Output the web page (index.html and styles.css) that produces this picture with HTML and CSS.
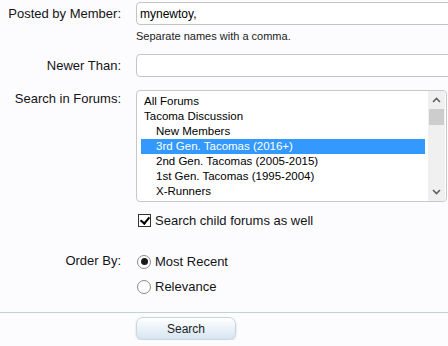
FILE: index.html
```html
<!DOCTYPE html>
<html lang="en">
<head>
  <meta charset="UTF-8">
  <title>Search Threads and Posts</title>
  <link rel="stylesheet" href="styles.css">
</head>
<body>
  <form class="search-form">
    <div class="ctrl-unit">
      <label class="ctrl-label">Posted by Member:</label>
      <div class="ctrl-field">
        <input type="text" class="text-ctrl" value="mynewtoy,">
        <p class="explain">Separate names with a comma.</p>
      </div>
    </div>

    <div class="ctrl-unit">
      <label class="ctrl-label">Newer Than:</label>
      <div class="ctrl-field">
        <input type="text" class="text-ctrl">
      </div>
    </div>

    <div class="ctrl-unit">
      <label class="ctrl-label list-label">Search in Forums:</label>
      <div class="ctrl-field">
        <div class="forum-list">
          <ul class="forum-options">
            <li>All Forums</li>
            <li>Tacoma Discussion</li>
            <li class="child">New Members</li>
            <li class="child selected">3rd Gen. Tacomas (2016+)</li>
            <li class="child">2nd Gen. Tacomas (2005-2015)</li>
            <li class="child">1st Gen. Tacomas (1995-2004)</li>
            <li class="child">X-Runners</li>
          </ul>
          <div class="scrollbar">
            <svg class="arrow" width="9" height="6" viewBox="0 0 9 6"><path d="M1 5 L4.5 1.5 L8 5" fill="none" stroke="#606060" stroke-width="1.6"/></svg>
            <div class="thumb"></div>
            <div class="track"></div>
            <svg class="arrow" width="9" height="6" viewBox="0 0 9 6"><path d="M1 1 L4.5 4.5 L8 1" fill="none" stroke="#606060" stroke-width="1.6"/></svg>
          </div>
        </div>
        <label class="check-line">
          <span class="check-box checked"></span>
          Search child forums as well
        </label>
      </div>
    </div>

    <div class="ctrl-unit order-unit">
      <label class="ctrl-label">Order By:</label>
      <div class="ctrl-field">
        <label class="radio-line"><span class="radio on"></span>Most Recent</label>
        <label class="radio-line"><span class="radio"></span>Relevance</label>
      </div>
    </div>

    <div class="submit-unit">
      <button type="button" class="button">Search</button>
    </div>
  </form>
</body>
</html>
```

FILE: styles.css
```css
* {
  margin: 0;
  padding: 0;
  box-sizing: border-box;
}
body {
  background: #fcfcff;
  font-family: 'Liberation Sans', Arial, sans-serif;
  color: #141414;
  overflow: hidden;
}
.search-form {
  padding-top: 2px;
}
.ctrl-unit {
  display: grid;
  grid-template-columns: 121px 1fr;
  column-gap: 15px;
  margin-bottom: 11px;
}
.ctrl-label {
  font-size: 13px;
  text-align: right;
  padding-top: 4px;
  line-height: 16px;
  white-space: nowrap;
}
.list-label {
  padding-top: 3px;
}
.ctrl-field {
  min-width: 0;
}
.text-ctrl {
  display: block;
  width: 340px;
  height: 23px;
  border: 1px solid #c4c4c4;
  border-radius: 4px;
  background: #fff;
  padding: 0 3px;
  font-family: 'Liberation Sans', Arial, sans-serif;
  font-size: 12px;
  color: #000;
  outline: none;
}
.explain {
  font-size: 11px;
  line-height: 14px;
  margin-top: 4px;
  color: #222;
}
.forum-list {
  display: flex;
  width: 311px;
  height: 112px;
  border: 1px solid #c8c8c8;
  border-radius: 4px;
  background: #fff;
  padding: 3px 1px 2px 4px;
  margin-top: 2px;
}
.forum-options {
  list-style: none;
  flex: 1;
  font-size: 11.5px;
  line-height: 15px;
  color: #000;
}
.forum-options li {
  padding-left: 3px;
  white-space: nowrap;
}
.forum-options .child {
  padding-left: 15px;
}
.forum-options .selected {
  background: #3399ff;
  color: #fff;
}
.scrollbar {
  width: 17px;
  margin: -3px 0 -2px 3px;
  background: #f0f0f0;
  display: flex;
  flex-direction: column;
  align-items: center;
}
.arrow {
  margin: 6px 0;
  flex: none;
}
.thumb {
  width: 15px;
  height: 16px;
  background: #cdcdcd;
}
.track {
  flex: 1;
}
.check-line {
  display: flex;
  align-items: center;
  gap: 4px;
  font-size: 13px;
  margin-top: 11px;
  margin-left: 2px;
}
.check-box {
  width: 13px;
  height: 13px;
  border: 1px solid #333;
  background: #fff;
  position: relative;
}
.check-box.checked::after {
  content: "";
  position: absolute;
  left: 3px;
  top: 0px;
  width: 4px;
  height: 7px;
  border: solid #000;
  border-width: 0 2px 2px 0;
  transform: rotate(40deg);
}
.order-unit {
  margin-top: 21px;
  margin-bottom: 13px;
}
.order-unit .ctrl-label {
  padding-top: 4px;
}
.radio-line {
  display: flex;
  align-items: center;
  gap: 4px;
  font-size: 13px;
  height: 25px;
  margin-left: 1px;
}
.radio {
  width: 14px;
  height: 14px;
  border: 1px solid #8a8a8a;
  border-radius: 50%;
  background: #fff;
  display: flex;
  align-items: center;
  justify-content: center;
}
.radio.on::after {
  content: "";
  width: 7px;
  height: 7px;
  border-radius: 50%;
  background: #1a1a1a;
}
.submit-unit {
  border-top: 1px solid #bfd3dc;
  padding: 4px 0 0 136px;
}
.button {
  width: 100px;
  height: 23px;
  border: 1px solid #c9d6e0;
  border-radius: 7px;
  background: linear-gradient(#ffffff, #d6e5f1);
  box-shadow: 0 1px 2px rgba(0, 0, 0, 0.2);
  font-family: 'Liberation Sans', Arial, sans-serif;
  font-size: 12px;
  color: #222;
}
```
